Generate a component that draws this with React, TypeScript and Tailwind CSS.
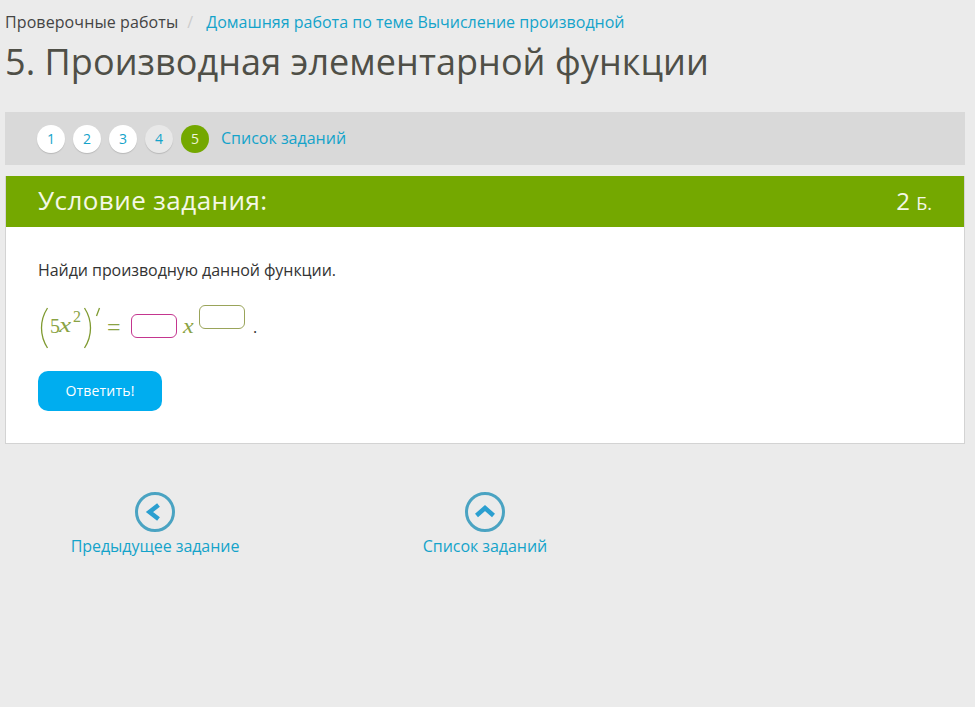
const steps = ['1', '2', '3', '4'];

function NavLink({ label, children, className }: { label: string; children: React.ReactNode; className: string }) {
  return (
    <a className={`flex flex-col items-center text-[16px] leading-[22px] tracking-[-0.05px] text-[#14a3ca] ${className}`}>
      <span className="flex h-10 w-10 items-center justify-center rounded-full border-[3px] border-[#4aa3c2]">
        <svg width="34" height="34" viewBox="0 0 34 34" fill="none" stroke="#2b9fd0" strokeWidth="4.5">
          {children}
        </svg>
      </span>
      <span className="mt-[3px]">{label}</span>
    </a>
  );
}

export default function App() {
  return (
    <div className="min-h-[707px] bg-[#ebebeb] pl-[5px] pr-[10px] font-['Open_Sans',sans-serif] text-[#444]">
      <div className="flex h-[47px] items-center pb-[3px] text-[16px] leading-[22px]">
        <span className="tracking-[0.1px] text-[#444]">Проверочные работы</span>
        <span className="ml-[9px] mr-[13px] text-[#ccc]">/</span>
        <a className="tracking-[0.01px] text-[#14a3ca]">Домашняя работа по теме Вычисление производной</a>
      </div>
      <h1 className="h-[65px] text-[36px] leading-[29px] tracking-[0.06px] text-[#4f4f47]">5. Производная элементарной функции</h1>

      <div className="flex h-[53px] items-center bg-[#d9d9d9] pl-[32px]">
        <div className="flex gap-2">
          {steps.map((s, i) => (
            <span
              key={s}
              className={`flex h-7 w-7 items-center justify-center rounded-full text-[14px] text-[#14a3ca] shadow-[0_1px_1px_rgba(0,0,0,0.15)] ${i === 3 ? 'bg-[#e8e8e8]' : 'bg-white'}`}
            >
              {s}
            </span>
          ))}
          <span className="flex h-7 w-7 items-center justify-center rounded-full bg-[#74a800] text-[14px] text-[#eef5d8]">5</span>
        </div>
        <a className="mb-[2px] ml-3 text-[16px] text-[#14a3ca]">Список заданий</a>
      </div>

      <div className="mt-[11px] border border-[#d3d3d3] border-t-0 bg-white">
        <div className="flex h-[51px] items-center justify-between bg-[#74a800] px-[32px] pb-[2px] text-[#f4f8e6]">
          <span className="text-[26px] tracking-[0.44px]">Условие задания:</span>
          <span className="text-[24px]">
            2 <span className="text-[18px]">Б.</span>
          </span>
        </div>
        <div className="h-[216px] px-[32px] pt-[32px]">
          <p className="text-[16px] leading-[22px] tracking-[-0.06px] text-[#333]">Найди производную данной функции.</p>
          <div className="mt-[20px] flex h-[54px] items-center font-['Liberation_Serif',serif] text-[#8aa344]">
            <svg width="12" height="42" viewBox="0 0 12 42" fill="none" className="shrink-0">
              <path d="M9.500 1C5 8 3.500 14 3.500 21s1.500 13 6 20" stroke="#7f9a30" strokeWidth="1.3" />
            </svg>
            <span className="mb-[5px] w-[9px] text-[20px] leading-none">5</span>
            <span className="mb-[5px] inline-block w-[13px] origin-left scale-x-[1.3] text-[21px] italic leading-none">x</span>
            <span className="mb-[22px] ml-[1px] w-[8px] text-[16px] leading-none">2</span>
            <svg width="14" height="42" viewBox="0 0 14 42" fill="none" className="shrink-0">
              <path d="M3.500 1c4.500 7 6 13 6 20s-1.500 13-6 20" stroke="#7f9a30" strokeWidth="1.3" />
            </svg>
            <svg width="6" height="42" viewBox="0 0 6 42" fill="none" className="shrink-0">
              <path d="M4.500 1 1.500 9" stroke="#7f9a30" strokeWidth="1.3" />
            </svg>
            <span className="ml-[6px] mb-[2px] w-[14px] text-[24px] leading-none">=</span>
            <span className="mb-[4px] ml-[10px] h-6 w-[46px] shrink-0 rounded-[6px] border-[1.5px] border-[#c4368f] bg-white" />
            <span className="mb-[5px] ml-[6px] inline-block w-[11px] origin-left scale-x-[1.2] text-[20px] italic leading-none">x</span>
            <span className="mb-[22px] ml-[5px] h-6 w-[46px] shrink-0 rounded-[6px] border-[1.5px] border-[#9aa45a] bg-white" />
            <span className="mb-[3px] ml-[8px] font-['Open_Sans',sans-serif] text-[16px] leading-none text-[#333]">.</span>
          </div>
          <button className="mt-[16px] h-10 w-[124px] rounded-[10px] bg-[#00adef] pb-[2px] text-[14px] tracking-[0.2px] text-white">Ответить!</button>
        </div>
      </div>

      <div className="mt-[48px] flex h-[70px] items-start">
        <NavLink label="Предыдущее задание" className="ml-[65px] w-[170px]">
          <path d="M20.500 10 11.500 17l9 7" />
        </NavLink>
        <NavLink label="Список заданий" className="ml-[180px] w-[130px]">
          <path d="M8.500 20.500 17 13l8.500 7.500" />
        </NavLink>
      </div>
    </div>
  );
}
